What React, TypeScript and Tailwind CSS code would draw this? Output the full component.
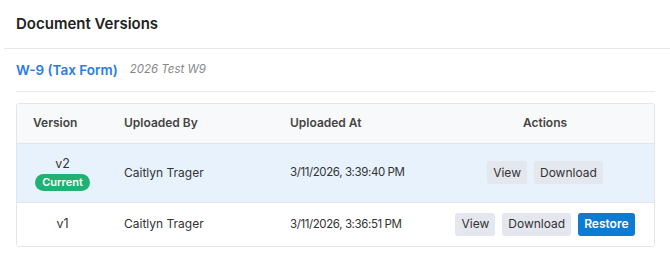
import React from 'react';

type Version = {
  version: string;
  current: boolean;
  uploadedBy: string;
  uploadedAt: string;
};

const versions: Version[] = [
  { version: 'v2', current: true, uploadedBy: 'Caitlyn Trager', uploadedAt: '3/11/2026, 3:39:40 PM' },
  { version: 'v1', current: false, uploadedBy: 'Caitlyn Trager', uploadedAt: '3/11/2026, 3:36:51 PM' },
];

const App: React.FC = () => {
  return (
    <div
      className="w-[670px] h-[274px] bg-white text-[#333]"
      style={{ fontFamily: 'Inter, "Noto Sans", sans-serif' }}
    >
      {/* HEADER */}
      <div className="ml-1 h-[49px] flex items-center pl-3 border-b border-[#e6e8ec]">
        <h2 className="text-[15px] font-semibold text-[#222]">Document Versions</h2>
      </div>

      <div className="pl-4 pr-[15px]">
        {/* DOCUMENT */}
        <div className="h-[43px] flex items-center gap-3 border-b border-[#e6e8ec]">
          <span className="text-[13.5px] font-semibold text-[#2a7be4]">W-9 (Tax Form)</span>
          <span className="text-[11.5px] italic text-[#888]">2026 Test W9</span>
        </div>

        {/* TABLE */}
        <div className="mt-[11px] border border-[#e3e5ea] rounded-[3px] overflow-hidden">
          <table className="w-full table-fixed border-collapse text-[12px] whitespace-nowrap">
            <colgroup>
              <col className="w-[91px]" />
              <col className="w-[166px]" />
              <col className="w-[162px]" />
              <col />
            </colgroup>
            <thead>
              <tr className="h-[39px] bg-[#f8f9fa] border-b border-[#e3e5ea] text-[#444]">
                <th className="px-4 text-left font-semibold">Version</th>
                <th className="px-4 text-left font-semibold">Uploaded By</th>
                <th className="px-4 text-left font-semibold">Uploaded At</th>
                <th className="px-4 text-center font-semibold">Actions</th>
              </tr>
            </thead>
            <tbody>
              {versions.map((v) => (
                <tr
                  key={v.version}
                  className={
                    v.current
                      ? 'h-[59px] bg-[#e8f2fd] border-b border-[#e3e5ea]'
                      : 'h-[44px] bg-white'
                  }
                >
                  <td className="px-2 text-center">
                    <div className="flex flex-col items-center">
                      <span className="leading-[18px] text-[12.5px]">{v.version}</span>
                      {v.current && (
                        <span className="mt-[1px] px-[7px] h-[17px] leading-[17px] rounded-full bg-[#1fb272] text-white text-[11px] font-semibold">
                          Current
                        </span>
                      )}
                    </div>
                  </td>
                  <td className="px-4">{v.uploadedBy}</td>
                  <td className="px-4 text-[11.5px] tracking-[-0.4px]">{v.uploadedAt}</td>
                  <td className="px-2">
                    <div className="flex justify-center gap-[7px]">
                      <button className="h-[23px] px-[6px] rounded-[3px] bg-[#e5e7ee] text-[#333] text-[12px]">
                        View
                      </button>
                      <button className="h-[23px] px-[6px] rounded-[3px] bg-[#e5e7ee] text-[#333] text-[12px]">
                        Download
                      </button>
                      {!v.current && (
                        <button className="h-[23px] px-[6px] rounded-[3px] bg-[#0b7bd4] text-white text-[12px] font-semibold">
                          Restore
                        </button>
                      )}
                    </div>
                  </td>
                </tr>
              ))}
            </tbody>
          </table>
        </div>
      </div>
    </div>
  );
};

export default App;
